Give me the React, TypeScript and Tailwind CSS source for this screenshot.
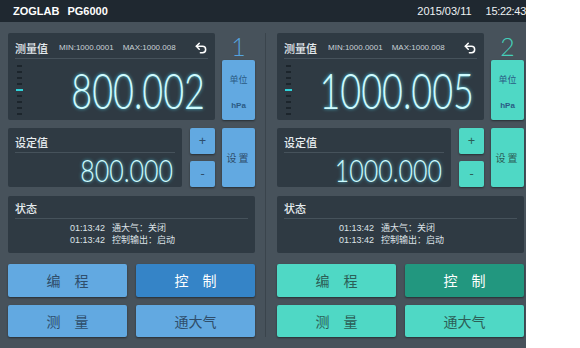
import React from 'react';
import { Undo2 } from 'lucide-react';

type Theme = {
  btn: string;
  btnDark: string;
  btnText: string;
  num: string;
};

const BLUE: Theme = {
  btn: 'bg-[#62a9e1]',
  btnDark: 'bg-[#3584c7]',
  btnText: 'text-[#2f4e6b]',
  num: 'text-[#55a3df]',
};

const TEAL: Theme = {
  btn: 'bg-[#4fd8c5]',
  btnDark: 'bg-[#22977f]',
  btnText: 'text-[#2c5f57]',
  num: 'text-[#45cfba]',
};

const channels = [
  { id: 1, value: '800.002', set: '800.000', theme: BLUE },
  { id: 2, value: '1000.005', set: '1000.000', theme: TEAL },
];

const cjk = "font-['Noto_Sans_CJK_SC','Noto_Sans',sans-serif]";
const seg = "inline-block font-['Lato','Roboto',sans-serif] font-light tabular-nums text-[#cdfbff] [text-shadow:0_0_3px_rgba(90,230,255,0.8)]";

function Ticks() {
  return (
    <div className="ml-[2px] flex w-[7px] shrink-0 flex-col items-start gap-[4px]">
      {[0, 1, 2, 3, 4, 5, 6, 7, 8].map((i) =>
        i === 4 ? (
          <div key={i} className="h-[2px] w-[7px] -ml-px bg-[#2fd3d9]" />
        ) : (
          <div key={i} className="h-[2px] w-[5px] bg-[#1c252c]" />
        )
      )}
    </div>
  );
}

function StatusLine({ time, text }: { time: string; text: string }) {
  return (
    <div className="flex h-[12px] items-center">
      <span className="w-[42px] font-['Liberation_Sans',sans-serif] leading-[12px]">{time}</span>
      <span className={`${cjk} leading-[12px]`}>{text}</span>
    </div>
  );
}

function Channel({ c }: { c: (typeof channels)[number] }) {
  const t = c.theme;
  return (
    <div className="flex w-[247px] flex-col">
      {/* measured value */}
      <div className="flex h-[87px] gap-[7px]">
        <div className="flex w-[207px] flex-col rounded-[2px] bg-[#2f3a43] px-[7px] pt-[6px]">
          <div className="flex h-[20px] items-center border-b border-[#46525b] pb-[1px]">
            <span className={`${cjk} text-[11px] font-medium text-[#e6ecef]`}>测量值</span>
            <span className="ml-[11px] font-['Liberation_Sans',sans-serif] text-[8px] text-[#c9d1d6]">MIN:1000.0001</span>
            <span className="ml-[9px] font-['Liberation_Sans',sans-serif] text-[8px] text-[#c9d1d6]">MAX:1000.008</span>
            <Undo2 className="ml-auto h-[14px] w-[14px] text-white" strokeWidth={2.6} />
          </div>
          <div className="flex flex-1 items-center">
            <Ticks />
            <div className="ml-auto mr-[3px] flex items-center">
              <span className={`${seg} origin-center scale-y-[1.34] text-[36px] leading-none`}>{c.value}</span>
            </div>
          </div>
        </div>
        <div className="flex w-[33px] flex-col">
          <div className={`flex h-[27px] items-center justify-center font-['Lato',sans-serif] text-[25px] font-light leading-none ${t.num}`}>
            {c.id}
          </div>
          <div className={`flex flex-1 flex-col items-center rounded-[2px] ${t.btn} shadow-[0_1px_2px_rgba(0,0,0,0.45)]`}>
            <span className={`${cjk} mt-[13px] text-[9px] text-[#2a5a84]`}>单位</span>
            <span className="mt-[13px] font-['Liberation_Sans',sans-serif] text-[8px] font-bold text-[#2a5a84]">hPa</span>
          </div>
        </div>
      </div>

      {/* set value */}
      <div className="mt-[8px] flex h-[59px]">
        <div className="flex w-[174px] flex-col rounded-[2px] bg-[#2f3a43] px-[7px] pt-[5px]">
          <div className="flex h-[20px] items-center border-b border-[#46525b] pb-[1px]">
            <span className={`${cjk} text-[11px] font-medium text-[#e6ecef]`}>设定值</span>
          </div>
          <div className="flex flex-1 items-center justify-end pr-[2px] pb-[1px]">
            <span className={`${seg} origin-center scale-y-[1.28] text-[25px] leading-none`}>{c.set}</span>
          </div>
        </div>
        <div className="ml-[8px] flex w-[25px] flex-col gap-[7px]">
          <div className={`flex h-[26px] items-center justify-center rounded-[2px] ${t.btn} text-[13px] ${t.btnText} shadow-[0_1px_2px_rgba(0,0,0,0.45)]`}>+</div>
          <div className={`flex h-[26px] items-center justify-center rounded-[2px] ${t.btn} text-[13px] ${t.btnText} shadow-[0_1px_2px_rgba(0,0,0,0.45)]`}>-</div>
        </div>
        <div className={`ml-[7px] flex w-[33px] items-center justify-center rounded-[2px] ${t.btn} ${cjk} text-[10px] tracking-[2px] ${t.btnText} shadow-[0_1px_2px_rgba(0,0,0,0.45)]`}>
          设置
        </div>
      </div>

      {/* status */}
      <div className="mt-[9px] flex h-[57px] flex-col rounded-[2px] bg-[#2f3a43] px-[7px] pt-[3px]">
        <div className="flex h-[20px] items-center border-b border-[#46525b] pb-[1px]">
          <span className={`${cjk} text-[11px] font-medium text-[#e6ecef]`}>状态</span>
        </div>
        <div className="mt-[3px] flex flex-col pl-[55px] text-[9px] text-[#dde3e7]">
          <StatusLine time="01:13:42" text="通大气：关闭" />
          <StatusLine time="01:13:42" text="控制输出：启动" />
        </div>
      </div>

      {/* buttons */}
      <div className={`mt-[11px] grid grid-cols-2 gap-x-[9px] gap-y-[8px] ${cjk} text-[14px]`}>
        <div className={`flex h-[33px] items-center justify-center rounded-[2px] ${t.btn} ${t.btnText} shadow-[0_1px_2px_rgba(0,0,0,0.45)]`}>编　程</div>
        <div className={`flex h-[33px] items-center justify-center rounded-[2px] ${t.btnDark} text-white shadow-[0_1px_2px_rgba(0,0,0,0.45)]`}>控　制</div>
        <div className={`flex h-[32px] items-center justify-center rounded-[2px] ${t.btn} ${t.btnText} shadow-[0_1px_2px_rgba(0,0,0,0.45)]`}>测　量</div>
        <div className={`flex h-[32px] items-center justify-center rounded-[2px] ${t.btn} ${t.btnText} shadow-[0_1px_2px_rgba(0,0,0,0.45)]`}>通大气</div>
      </div>
    </div>
  );
}

export default function App() {
  return (
    <div className="h-[348px] w-[580px] bg-white">
      <div className="flex h-[348px] w-[526px] flex-col overflow-hidden bg-[#47525b]">
        <div className="flex h-[22px] items-center bg-[#1f2830] pl-[13px]">
          <span className="font-['Liberation_Sans',sans-serif] text-[11px] font-bold text-white">ZOGLAB</span>
          <span className="ml-[8px] font-['Liberation_Sans',sans-serif] text-[11px] font-bold text-white">PG6000</span>
          <span className="ml-auto font-['Liberation_Sans',sans-serif] text-[11px] text-[#eef2f4]">2015/03/11</span>
          <span className="ml-[14px] whitespace-nowrap font-['Liberation_Sans',sans-serif] text-[11px] tracking-[-0.3px] text-[#eef2f4]">15:22:43</span>
        </div>
        <div className="flex pl-[8px] pt-[11px]">
          <Channel c={channels[0]} />
          <div className="ml-[10px] mr-[11px] w-px bg-[#3a444c]" />
          <Channel c={channels[1]} />
        </div>
      </div>
    </div>
  );
}
